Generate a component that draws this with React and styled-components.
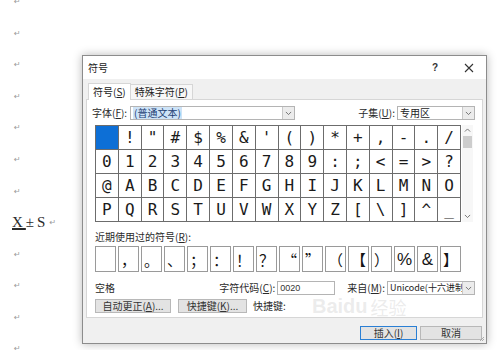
import React from 'react';
import styled, { createGlobalStyle } from 'styled-components';

const GlobalStyle = createGlobalStyle`
  html, body {
    margin: 0;
    padding: 0;
    background: #fff;
  }
  body {
    font-family: "Noto Sans CJK SC", "Noto Sans", sans-serif;
    color: #1e1e1e;
  }
`;

const Page = styled.div`
  position: relative;
  width: 500px;
  height: 350px;
  overflow: hidden;
  background: #fff;
`;

const Doc = styled.div`
  margin-top: -14px;
  padding-left: 12px;
`;

const DocLine = styled.div`
  height: 31.55px;
  display: flex;
  align-items: center;
  padding-left: ${p => (p.$text ? 0 : 2)}px;
  font-family: "Liberation Serif", serif;
  font-size: 15px;
  color: #2a2a2a;
`;

const Mark = styled.span`
  font-family: "DejaVu Sans", sans-serif;
  font-size: 8px;
  color: #9a9a9a;
  margin-left: ${p => (p.$after ? 1 : 0)}px;
`;

const Formula = styled.span`
  letter-spacing: 3px;
  u {
    text-decoration-thickness: 1.5px;
  }
`;

const Dialog = styled.div`
  position: absolute;
  left: 82px;
  top: 55px;
  width: 405px;
  height: 289px;
  box-sizing: border-box;
  border: 1px solid #8c8c8c;
  background: #f0f0f0;
  box-shadow: 0 0 9px rgba(0, 0, 0, 0.28);
  display: flex;
  flex-direction: column;
  font-size: 10px;
  line-height: 1;
`;

const TitleBar = styled.div`
  height: 23px;
  flex: none;
  background: #fff;
  display: flex;
  align-items: center;
  padding-left: 5px;
`;

const Title = styled.span`
  font-size: 10px;
  color: #222;
`;

const Controls = styled.div`
  margin-left: auto;
  display: flex;
  height: 100%;
`;

const CtrlButton = styled.div`
  width: 34px;
  display: flex;
  align-items: center;
  justify-content: center;
  font-family: "Liberation Sans", sans-serif;
  font-size: 10px;
  font-weight: bold;
  color: #333;
`;

const Body = styled.div`
  flex: 1;
  padding: 3px 3px 0 3px;
  display: flex;
  flex-direction: column;
`;

const Tabs = styled.div`
  display: flex;
  align-items: flex-end;
  padding-left: 2px;
  height: 17px;
`;

const Tab = styled.div`
  height: ${p => (p.$active ? 17 : 15)}px;
  box-sizing: border-box;
  padding: 0 4px;
  display: flex;
  align-items: center;
  background: ${p => (p.$active ? '#fff' : '#f7f7f7')};
  border: 1px solid #d6d6d6;
  border-bottom: none;
  border-left: ${p => (p.$active ? '1px solid #d6d6d6' : 'none')};
  margin-bottom: ${p => (p.$active ? -1 : 0)}px;
  position: relative;
  z-index: ${p => (p.$active ? 1 : 0)};
  color: #222;
  white-space: nowrap;
`;

const Panel = styled.div`
  height: 219px;
  box-sizing: border-box;
  background: #fff;
  border: 1px solid #d6d6d6;
  padding: 6px 5px 0 5px;
  display: flex;
  flex-direction: column;
`;

const Row = styled.div`
  display: flex;
  align-items: center;
  height: 14px;
  flex: none;
  margin-top: ${p => p.$top || 0}px;
  padding-left: ${p => p.$left || 0}px;
  padding-right: ${p => p.$right || 0}px;
`;

const Label = styled.span`
  white-space: nowrap;
  color: #2a2a2a;
  margin-left: ${p => p.$ml || 0}px;
  margin-right: ${p => p.$mr || 0}px;
`;

const Combo = styled.div`
  width: ${p => p.$w}px;
  height: 14px;
  box-sizing: border-box;
  border: 1px solid #b4b4b4;
  background: #fff;
  display: flex;
  align-items: center;
  margin-left: ${p => p.$ml || 0}px;
  overflow: hidden;
`;

const ComboText = styled.span`
  flex: 1;
  padding-left: 2px;
  white-space: nowrap;
  overflow: hidden;
  color: #222;
  font-size: ${p => p.$fs || 10}px;
  line-height: 12px;
`;

const Selected = styled.span`
  background: #cde3f7;
  color: #1d3f73;
  padding: 0 1px;
`;

const ComboArrow = styled.div`
  width: 11px;
  height: 12px;
  flex: none;
  border-left: 1px solid #c9c9c9;
  background: #ececec;
  display: flex;
  align-items: center;
  justify-content: center;
`;

const GridArea = styled.div`
  display: flex;
  margin-top: 5px;
  margin-left: 3px;
`;

const Grid = styled.div`
  width: 366px;
  height: 97px;
  box-sizing: border-box;
  display: grid;
  grid-template-columns: repeat(16, 1fr);
  grid-template-rows: repeat(4, 1fr);
  gap: 1px;
  padding: 1px;
  background: #6c6c6c;
`;

const Cell = styled.div`
  background: ${p => (p.$sel ? '#0d6fd6' : '#fff')};
  display: flex;
  align-items: center;
  justify-content: center;
  font-family: "DejaVu Sans Mono", monospace;
  font-size: 16px;
  color: #1a1a1a;
`;

const Scrollbar = styled.div`
  width: 11px;
  margin-left: 1px;
  background: #f7f7f7;
  display: flex;
  flex-direction: column;
  align-items: center;
`;

const ScrollArrow = styled.div`
  height: 11px;
  display: flex;
  align-items: center;
  justify-content: center;
`;

const Thumb = styled.div`
  width: 9px;
  height: 12px;
  background: #cdcdcd;
`;

const ScrollFill = styled.div`
  flex: 1;
`;

const RecentLabel = styled.div`
  margin-top: 9px;
  margin-left: 3px;
  height: 12px;
  line-height: 12px;
  color: #2a2a2a;
  white-space: nowrap;
`;

const Recent = styled.div`
  margin-top: 3px;
  margin-left: 3px;
  width: 366px;
  height: 26px;
  display: grid;
  grid-template-columns: repeat(16, 1fr);
  gap: 2px;
`;

const RecentCell = styled.div`
  border: 1px solid #9a9a9a;
  display: flex;
  align-items: center;
  justify-content: center;
  font-size: ${p => (p.$ascii ? 17 : 15)}px;
  font-family: ${p => (p.$ascii ? '"Liberation Sans", sans-serif' : '"Noto Sans CJK SC", sans-serif')};
  color: #151515;
  overflow: hidden;
`;

const CodeInput = styled.div`
  width: 58px;
  height: 14px;
  box-sizing: border-box;
  border: 1px solid #b4b4b4;
  background: #fff;
  margin-left: 2px;
  padding-left: 2px;
  display: flex;
  align-items: center;
  font-family: "Liberation Sans", sans-serif;
  font-size: 9px;
  color: #333;
`;

const Spacer = styled.div`
  flex: 1;
`;

const Button = styled.div`
  width: ${p => p.$w}px;
  height: 14px;
  box-sizing: border-box;
  border: 1px solid ${p => (p.$focus ? '#2a7fd4' : '#b8b8b8')};
  background: #e3e3e3;
  display: flex;
  align-items: center;
  justify-content: center;
  color: #333;
  white-space: nowrap;
  margin-left: ${p => p.$ml || 0}px;
`;

const Footer = styled.div`
  display: flex;
  justify-content: flex-end;
  gap: 3px;
  padding: 8px 1px 0 0;
`;

const Grip = styled.svg`
  position: absolute;
  right: 1px;
  bottom: 1px;
`;

const Watermark = styled.div`
  position: absolute;
  left: 312px;
  top: 296px;
  color: rgba(200, 200, 200, 0.35);
  pointer-events: none;
  display: flex;
  align-items: flex-end;
  gap: 3px;
  font-family: "Liberation Sans", sans-serif;
  font-size: 20px;
  font-weight: bold;
  line-height: 1;
`;

const WmCjk = styled.span`
  font-family: "Noto Sans CJK SC", sans-serif;
  font-size: 18px;
  font-weight: normal;
`;

const Chevron = ({ up, size = 7, color = '#666' }) => (
  <svg width={size} height={size / 2 + 1} viewBox="0 0 8 5">
    <polyline
      points={up ? '1,4 4,1 7,4' : '1,1 4,4 7,1'}
      fill="none"
      stroke={color}
      strokeWidth="1"
    />
  </svg>
);

const gridChars = Array.from({ length: 64 }, (_, i) => String.fromCharCode(0x20 + i));
const recentChars = ['', '，', '。', '、', '；', '：', '！', '？', '“', '”', '（', '【', '）', '%', '&', '】'];

const Acc = ({ k }) => <>(<u>{k}</u>)</>;

export default function App() {
  const marks = Array.from({ length: 12 }, (_, i) => i);
  return (
    <Page>
      <GlobalStyle />
      <Doc>
        {marks.map(i =>
          i === 7 ? (
            <DocLine key={i} $text>
              <Formula>
                <u>X</u>±S
              </Formula>
              <Mark $after>↵</Mark>
            </DocLine>
          ) : (
            <DocLine key={i}>
              <Mark>↵</Mark>
            </DocLine>
          )
        )}
      </Doc>

      <Dialog>
        <TitleBar>
          <Title>符号</Title>
          <Controls>
            <CtrlButton>?</CtrlButton>
            <CtrlButton>
              <svg width="10" height="10" viewBox="0 0 10 10">
                <path d="M1 1 L9 9 M9 1 L1 9" stroke="#333" strokeWidth="1.1" />
              </svg>
            </CtrlButton>
          </Controls>
        </TitleBar>
        <Body>
          <Tabs>
            <Tab $active>符号<Acc k="S" /></Tab>
            <Tab>特殊字符<Acc k="P" /></Tab>
          </Tabs>
          <Panel>
            <Row $right={2}>
              <Label>字体<Acc k="F" />:</Label>
              <Combo $w={165} $ml={3}>
                <ComboText><Selected>(普通文本)</Selected></ComboText>
                <ComboArrow><Chevron /></ComboArrow>
              </Combo>
              <Spacer />
              <Label>子集<Acc k="U" />:</Label>
              <Combo $w={78} $ml={2}>
                <ComboText>专用区</ComboText>
                <ComboArrow><Chevron /></ComboArrow>
              </Combo>
            </Row>

            <GridArea>
              <Grid>
                {gridChars.map((c, i) => (
                  <Cell key={i} $sel={i === 0}>{c}</Cell>
                ))}
              </Grid>
              <Scrollbar>
                <ScrollArrow><Chevron up /></ScrollArrow>
                <Thumb />
                <ScrollFill />
                <ScrollArrow><Chevron /></ScrollArrow>
              </Scrollbar>
            </GridArea>

            <RecentLabel>近期使用过的符号<Acc k="R" />:</RecentLabel>
            <Recent>
              {recentChars.map((c, i) => (
                <RecentCell key={i} $ascii={c === '%' || c === '&'}>{c}</RecentCell>
              ))}
            </Recent>

            <Row $top={9} $left={3} $right={2}>
              <Label>空格</Label>
              <Spacer />
              <Label>字符代码<Acc k="C" />:</Label>
              <CodeInput>0020</CodeInput>
              <Label $ml={12}>来自<Acc k="M" />:</Label>
              <Combo $w={88} $ml={2}>
                <ComboText $fs={9}>Unicode(十六进制)</ComboText>
                <ComboArrow><Chevron /></ComboArrow>
              </Combo>
            </Row>

            <Row $top={4} $left={3}>
              <Button $w={76}>自动更正<Acc k="A" />...</Button>
              <Button $w={69} $ml={7}>快捷键<Acc k="K" />...</Button>
              <Label $ml={6}>快捷键:</Label>
            </Row>
          </Panel>
          <Footer>
            <Button $w={57} $focus>插入<Acc k="I" /></Button>
            <Button $w={62}>取消</Button>
          </Footer>
        </Body>
        <Grip width="6" height="6" viewBox="0 0 6 6">
          <path d="M5 1 L1 5 M5 3 L3 5" stroke="#9a9a9a" strokeWidth="0.8" />
        </Grip>
      </Dialog>

      <Watermark>
        <span>Baidu</span>
        <WmCjk>经验</WmCjk>
      </Watermark>
    </Page>
  );
}
